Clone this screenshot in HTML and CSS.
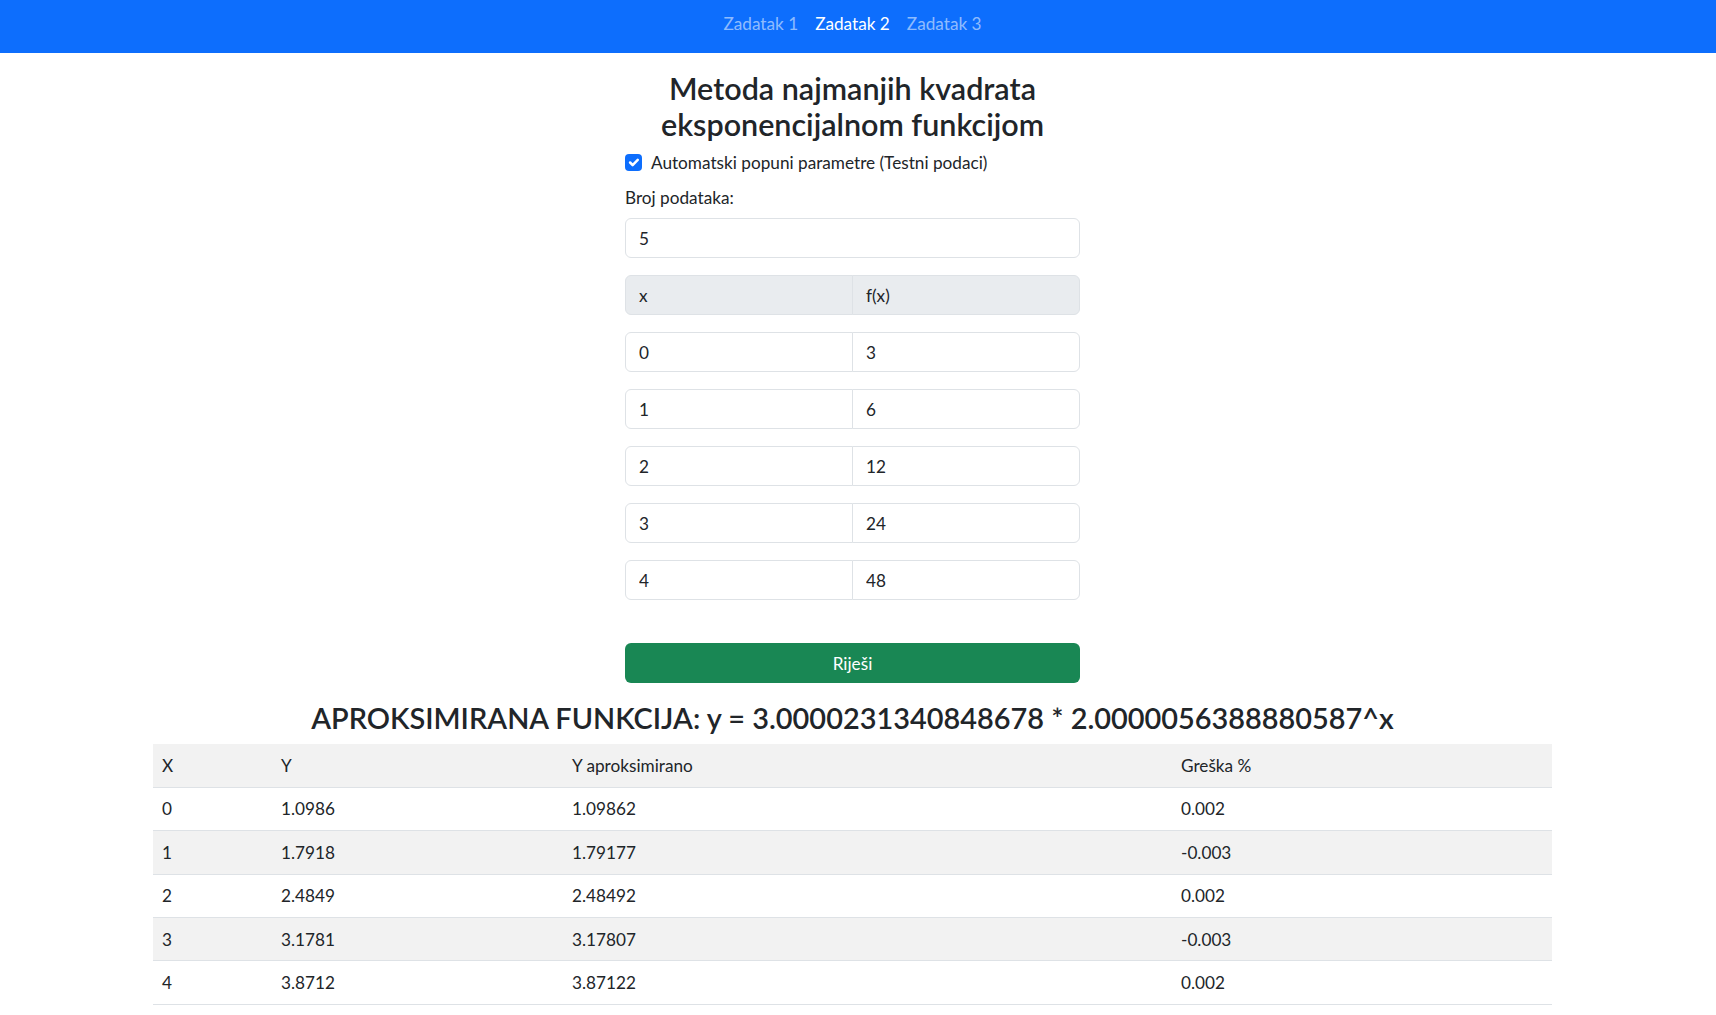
FILE: index.html
```html
<!DOCTYPE html>
<html lang="hr">
<head>
<meta charset="utf-8">
<title>Metoda najmanjih kvadrata</title>
<link rel="stylesheet" href="styles.css">
</head>
<body>
<nav class="topbar">
  <div class="nav-inner">
    <a class="nav-link" href="#">Zadatak 1</a>
    <a class="nav-link active" href="#">Zadatak 2</a>
    <a class="nav-link" href="#">Zadatak 3</a>
  </div>
</nav>
<main class="page">
  <section class="form-col">
    <h2 class="title">Metoda najmanjih kvadrata eksponencijalnom funkcijom</h2>
    <label class="check">
      <span class="check-box"><svg viewBox="0 0 20 20" width="17" height="17"><path d="M6 10l3 3l6-6" fill="none" stroke="#fff" stroke-width="3" stroke-linecap="round" stroke-linejoin="round"/></svg></span>
      <span>Automatski popuni parametre (Testni podaci)</span>
    </label>
    <label class="field-label">Broj podataka:</label>
    <input class="field" type="text" value="5">
    <div class="pair pair-head"><span class="cell">x</span><span class="cell">f(x)</span></div>
    <div class="pair"><input class="cell" type="text" value="0"><input class="cell" type="text" value="3"></div>
    <div class="pair"><input class="cell" type="text" value="1"><input class="cell" type="text" value="6"></div>
    <div class="pair"><input class="cell" type="text" value="2"><input class="cell" type="text" value="12"></div>
    <div class="pair"><input class="cell" type="text" value="3"><input class="cell" type="text" value="24"></div>
    <div class="pair"><input class="cell" type="text" value="4"><input class="cell" type="text" value="48"></div>
    <button class="solve" type="button">Riješi</button>
  </section>
  <h2 class="result-title">APROKSIMIRANA FUNKCIJA: y = 3.0000231340848678 * 2.0000056388880587^x</h2>
  <table class="results">
    <colgroup>
      <col class="c-x"><col class="c-y"><col class="c-ya"><col class="c-err">
    </colgroup>
    <thead>
      <tr><th>X</th><th>Y</th><th>Y aproksimirano</th><th>Greška %</th></tr>
    </thead>
    <tbody>
      <tr><td>0</td><td>1.0986</td><td>1.09862</td><td>0.002</td></tr>
      <tr><td>1</td><td>1.7918</td><td>1.79177</td><td>-0.003</td></tr>
      <tr><td>2</td><td>2.4849</td><td>2.48492</td><td>0.002</td></tr>
      <tr><td>3</td><td>3.1781</td><td>3.17807</td><td>-0.003</td></tr>
      <tr><td>4</td><td>3.8712</td><td>3.87122</td><td>0.002</td></tr>
    </tbody>
  </table>
</main>
</body>
</html>
```
FILE: styles.css
```css
html, body {
  margin: 0;
  background: #fff;
}
body {
  font-family: "Lato", "Open Sans", sans-serif;
  font-size: 17.2px;
  line-height: 25.2px;
  color: #212529;
}
.topbar {
  background: #0d6efd;
  height: 53px;
}
.nav-inner {
  display: flex;
  justify-content: center;
  padding: 11px 11px 0 0;
}
.nav-link {
  color: rgba(255, 255, 255, 0.55);
  text-decoration: none;
  padding: 0 8.5px;
}
.nav-link.active {
  color: #fff;
}
.page {
  display: flex;
  flex-direction: column;
  align-items: center;
  padding-right: 11px;
}
.form-col {
  width: 455px;
  display: flex;
  flex-direction: column;
}
.title {
  margin: 17px 0 0;
  font-size: 30.5px;
  line-height: 36px;
  font-weight: 600;
  text-align: center;
}
.check {
  display: flex;
  align-items: center;
  gap: 9px;
  margin-top: 8px;
}
.check-box {
  width: 17px;
  height: 17px;
  border-radius: 4px;
  background: #0d6efd;
  display: flex;
  flex: none;
}
.field-label {
  margin-top: 10px;
}
.field {
  margin-top: 8px;
  height: 40px;
  box-sizing: border-box;
  border: 1px solid #dee2e6;
  border-radius: 6px;
  padding: 0 13px;
  font: inherit;
  color: #212529;
  background: #fff;
  outline: none;
}
.pair {
  display: flex;
  margin-top: 17px;
  height: 40px;
}
.pair .cell {
  flex: 1 1 0;
  min-width: 0;
  box-sizing: border-box;
  height: 40px;
  border: 1px solid #dee2e6;
  padding: 0 13px;
  font: inherit;
  color: #212529;
  background: #fff;
  outline: none;
  margin: 0;
}
.pair .cell:first-child {
  border-radius: 6px 0 0 6px;
}
.pair .cell:last-child {
  border-radius: 0 6px 6px 0;
  margin-left: -1px;
}
.pair-head .cell {
  background: #e9ecef;
  display: flex;
  align-items: center;
}
.solve {
  margin-top: 43px;
  height: 40px;
  background: #198754;
  color: #fff;
  border: 0;
  border-radius: 6px;
  font: inherit;
  padding: 0;
}
.result-title {
  margin: 17px 0 8px;
  font-size: 28.9px;
  line-height: 36px;
  font-weight: 600;
  text-align: center;
}
.results {
  width: 1399px;
  border-collapse: collapse;
  table-layout: fixed;
}
.results th,
.results td {
  text-align: left;
  font-weight: 400;
  padding: 8.6px 9px;
  border-bottom: 1px solid #dee2e6;
}
.results thead tr,
.results tbody tr:nth-child(even) {
  background: #f2f2f2;
}
.c-x { width: 119px; }
.c-y { width: 291px; }
.c-ya { width: 609px; }
.c-err { width: 380px; }
```
